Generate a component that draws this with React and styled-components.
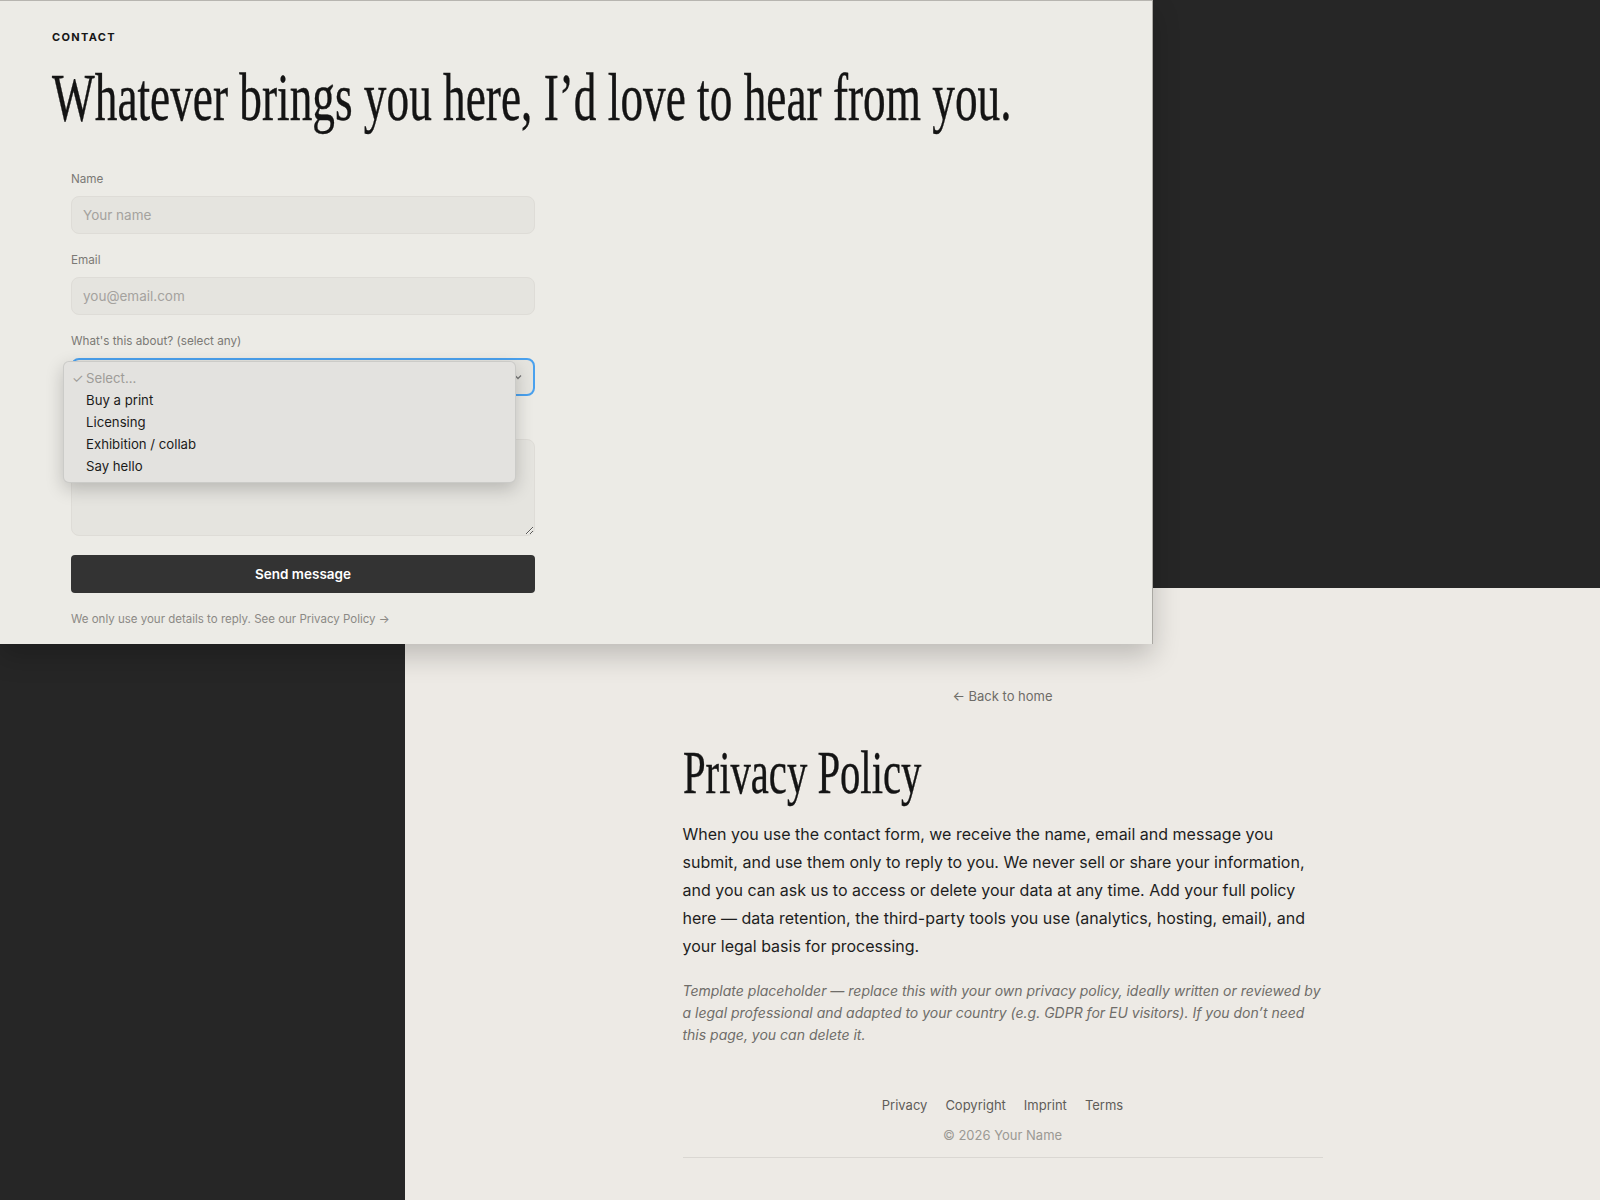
import React from "react";
import styled, { createGlobalStyle } from "styled-components";

const GlobalStyle = createGlobalStyle`
  html, body {
    margin: 0;
    padding: 0;
    background: #262626;
  }
  body {
    font-family: Inter, "Noto Sans", sans-serif;
    -webkit-font-smoothing: antialiased;
  }
`

const Desktop = styled.div`
  position: relative;
  width: 1600px;
  height: 1200px;
  overflow: hidden;
  background: #262626;
`

// two page screenshots lying on a dark canvas
const ContactWindow = styled.section`
  position: absolute;
  left: 0;
  top: 0;
  z-index: 2;
  width: 1153px;
  height: 644px;
  box-sizing: border-box;
  padding: 29px 0 0 52px;
  background: #ecebe6;
  border-top: 1px solid #b7b5b0;
  border-right: 1px solid #aaa8a3;
  box-shadow: 0 12px 26px rgba(0, 0, 0, 0.2);
`

const PolicyWindow = styled.section`
  position: absolute;
  left: 405px;
  top: 588px;
  right: 0;
  bottom: 0;
  z-index: 1;
  display: flex;
  flex-direction: column;
  align-items: center;
  padding-top: 99px;
  background: #edeae5;
`

const Eyebrow = styled.div`
  font-size: 11px;
  line-height: 14px;
  font-weight: 700;
  letter-spacing: 0.12em;
  color: #161616;
`

const Headline = styled.h1`
  margin: 19px 0 0;
  font-family: "Liberation Serif", serif;
  font-weight: 400;
  font-size: 68px;
  line-height: 68px;
  color: #141414;
  white-space: nowrap;
  -webkit-text-stroke: 0.4px #141414;
  transform: scaleX(0.666);
  transform-origin: left top;
`

const Form = styled.form`
  margin: 40px 0 0 19px;
  width: 464px;
  display: flex;
  flex-direction: column;
  gap: 18px;
`

const Field = styled.div`
  position: relative;
  display: flex;
  flex-direction: column;
  gap: 9px;
`

const Label = styled.label`
  font-size: 11.7px;
  line-height: 16px;
  color: #7b7975;
`

const Input = styled.input`
  box-sizing: border-box;
  height: 38px;
  padding: 0 11px;
  border: 1px solid #dedcd7;
  border-radius: 8px;
  background: #e5e4df;
  font-family: inherit;
  font-size: 13.5px;
  color: #222;
  outline: none;
  &::placeholder {
    color: #a4a29e;
  }
`

const SelectBox = styled.div`
  box-sizing: border-box;
  height: 38px;
  padding: 0 10px;
  display: flex;
  align-items: center;
  justify-content: flex-end;
  border: 2px solid #4aa1ee;
  border-radius: 8px;
  background: #e5e4df;
`

const TextArea = styled.textarea`
  box-sizing: border-box;
  height: 97px;
  padding: 10px 11px;
  border: 1px solid #dedcd7;
  border-radius: 8px;
  background: #e5e4df;
  font-family: inherit;
  font-size: 13.5px;
  resize: vertical;
  outline: none;
`

const Menu = styled.ul`
  position: absolute;
  left: -8px;
  top: 28px;
  width: 453px;
  box-sizing: border-box;
  margin: 0;
  padding: 5px 0 5px 8px;
  list-style: none;
  background: #e3e2df;
  border: 1px solid rgba(0, 0, 0, 0.1);
  border-radius: 6px;
  box-shadow: 0 6px 18px rgba(0, 0, 0, 0.2);
  z-index: 5;
`

const MenuItem = styled.li`
  display: flex;
  align-items: center;
  height: 22px;
  font-size: 13.2px;
  color: ${(p) => (p.$muted ? "#9e9c98" : "#1b1b1b")};
`

const Check = styled.span`
  width: 14px;
  font-size: 13px;
  color: #9e9c98;
`

const SendButton = styled.button`
  margin-top: 1px;
  height: 38px;
  border: none;
  border-radius: 4px;
  background: #333333;
  color: #fff;
  font-family: inherit;
  font-size: 13.5px;
  font-weight: 600;
`

const Note = styled.p`
  margin: 18px 0 0 19px;
  font-size: 11.5px;
  line-height: 16px;
  color: #8b8985;
`

const BackLink = styled.a`
  font-size: 13px;
  line-height: 18px;
  color: #6e6c68;
  text-decoration: none;
`

const Column = styled.article`
  width: 640px;
`

const PageTitle = styled.h2`
  margin: 36px 0 0;
  font-family: "Liberation Serif", serif;
  font-weight: 400;
  font-size: 62px;
  line-height: 62px;
  color: #141414;
  white-space: nowrap;
  -webkit-text-stroke: 0.4px #141414;
  transform: scaleX(0.656);
  transform-origin: left top;
`

const Body = styled.p`
  margin: 17px 0 0;
  font-size: 16px;
  line-height: 28px;
  color: #1e1e1e;
`

const Aside = styled.p`
  margin: 20px 0 0;
  font-size: 14px;
  line-height: 22px;
  font-style: italic;
  color: #6f6d69;
`

const Footer = styled.footer`
  margin-top: 50px;
  padding-bottom: 13px;
  border-bottom: 1px solid #dad7d2;
  display: flex;
  flex-direction: column;
  align-items: center;
  gap: 12px;
`

const FooterLinks = styled.nav`
  display: flex;
  gap: 18px;
  font-size: 13px;
  line-height: 18px;
  color: #5f5d59;
`

const Copyright = styled.div`
  font-size: 13px;
  line-height: 18px;
  color: #9b9994;
`

function Chevron() {
  return (
    <svg width="10" height="10" viewBox="0 0 10 10" fill="none" stroke="#777" strokeWidth="1.3">
      <path d="M2 3.5l3 3 3-3" />
    </svg>
  )
}

export default function App() {
  return (
    <>
      <GlobalStyle />
      <Desktop>
        <ContactWindow>
          <Eyebrow>CONTACT</Eyebrow>
          <Headline>Whatever brings you here, I’d love to hear from you.</Headline>
          <Form onSubmit={(e) => e.preventDefault()}>
            <Field>
              <Label>Name</Label>
              <Input placeholder="Your name" />
            </Field>
            <Field>
              <Label>Email</Label>
              <Input placeholder="you@email.com" />
            </Field>
            <Field>
              <Label>What's this about? (select any)</Label>
              <SelectBox>
                <Chevron />
              </SelectBox>
              <Menu>
                <MenuItem $muted><Check>✓</Check>Select...</MenuItem>
                <MenuItem><Check />Buy a print</MenuItem>
                <MenuItem><Check />Licensing</MenuItem>
                <MenuItem><Check />Exhibition / collab</MenuItem>
                <MenuItem><Check />Say hello</MenuItem>
              </Menu>
            </Field>
            <Field>
              <TextArea aria-label="Message" style={{ marginTop: 25 }} />
            </Field>
            <SendButton type="submit">Send message</SendButton>
          </Form>
          <Note>We only use your details to reply. See our Privacy Policy →</Note>
        </ContactWindow>

        <PolicyWindow>
          <BackLink href="#">← Back to home</BackLink>
          <Column>
            <PageTitle>Privacy Policy</PageTitle>
            <Body>
              When you use the contact form, we receive the name, email and message you
              submit, and use them only to reply to you. We never sell or share your
              information, and you can ask us to access or delete your data at any time.
              Add your full policy here — data retention, the third-party tools you use
              (analytics, hosting, email), and your legal basis for processing.
            </Body>
            <Aside>
              Template placeholder — replace this with your own privacy policy, ideally
              written or reviewed by a legal professional and adapted to your country
              (e.g. GDPR for EU visitors). If you don’t need this page, you can delete it.
            </Aside>
            <Footer>
              <FooterLinks>
                <span>Privacy</span>
                <span>Copyright</span>
                <span>Imprint</span>
                <span>Terms</span>
              </FooterLinks>
              <Copyright>© 2026 Your Name</Copyright>
            </Footer>
          </Column>
        </PolicyWindow>
      </Desktop>
    </>
  )
}
